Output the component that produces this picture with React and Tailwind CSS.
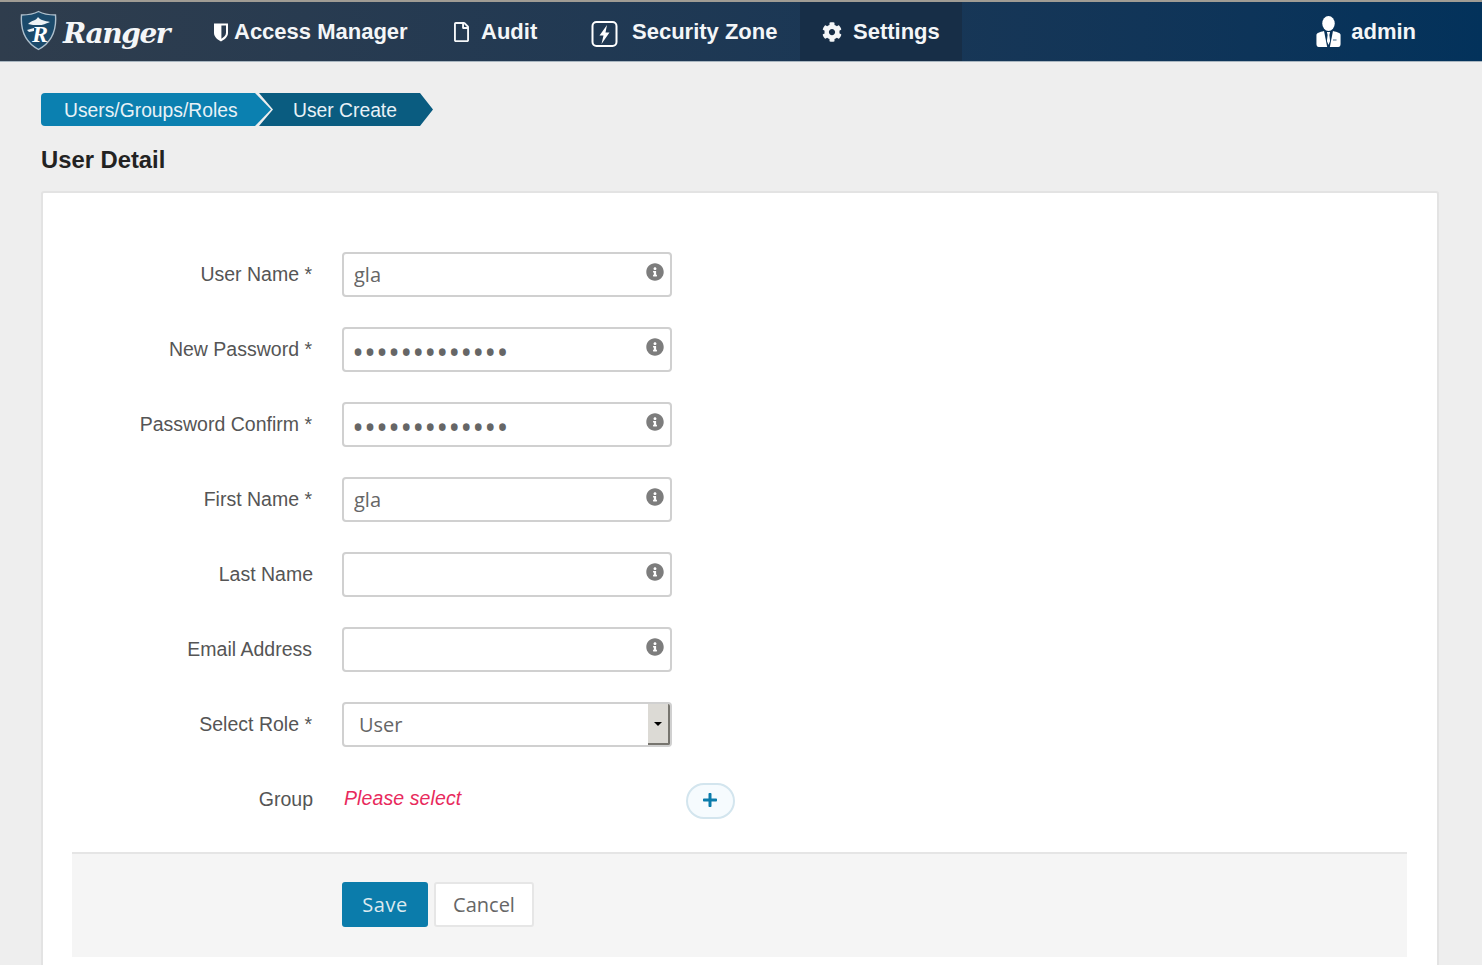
import React from "react";
import { FaCog, FaInfoCircle, FaPlus, FaRegFile } from "react-icons/fa";

const sans = "[font-family:'Liberation_Sans',Arial,sans-serif]";
const openSans = "[font-family:'Open_Sans',sans-serif]";

function Logo() {
  return (
    <div className="relative w-[39px] h-[41px] shrink-0">
      <svg viewBox="0 0 39 41" className="absolute inset-0 w-full h-full">
        <path d="M19.5 1.5 C25 4.5 30 5 36.5 5 C37.5 18 35 31 19.5 39.5 C4 31 1.5 18 2.5 5 C9 5 14 4.5 19.5 1.5 Z" fill="#1b4a6b" stroke="#aebfcc" strokeWidth="1.4" />
        <path d="M9 14 C13 10 17 11 19 7 C21 10 26 11 31 12 C26 14 24 15 22 15 L14 15 Z" fill="#eef2f5" />
        <path d="M8 20 L15 18 L15 21 L10 22 Z" fill="#eef2f5" />
      </svg>
      <span className="absolute left-[13px] top-[11px] text-[24px] leading-[26px] font-bold italic text-white [font-family:'Liberation_Serif',serif]">R</span>
    </div>
  );
}

function ShieldIcon() {
  return (
    <svg viewBox="0 0 16 20" className="w-[16px] h-[20px] shrink-0">
      <path fillRule="evenodd" fill="#fff" d="M1 1.5 H15 V11 C15 15 11 18 8 19.5 C5 18 1 15 1 11 Z M8.4 3.6 V16.8 C10.6 15.4 13 13.6 13 10.8 V3.6 Z" />
    </svg>
  );
}

function ZoneIcon() {
  return (
    <svg viewBox="0 0 28 28" className="w-[28px] h-[28px] shrink-0" fill="none">
      <rect x="1.5" y="3" width="24" height="24" rx="4" stroke="#fff" strokeWidth="2" />
      <path d="M16 6 L8.5 16.5 H12.5 L10.5 25 L18.5 13.5 H14.5 Z" fill="#fff" />
    </svg>
  );
}

function AdminIcon() {
  return (
    <svg viewBox="0 0 28 32" preserveAspectRatio="none" className="w-[25px] h-[32px] shrink-0">
      <ellipse cx="14" cy="7.5" rx="7" ry="7.5" fill="#fff" />
      <path fill="#fff" d="M0.5 19 C0.5 17 4 16 9 15 L12.5 31 H3 C1.5 31 0.5 30 0.5 28 Z" />
      <path fill="#fff" d="M27.5 19 C27.5 17 24 16 19 15 L15.5 31 H25 C26.5 31 27.5 30 27.5 28 Z" />
      <path fill="#fff" d="M12.2 16 H15.8 L15 19 L15.8 25 L14 29 L12.2 25 L13 19 Z" />
      <rect x="19" y="23" width="4" height="2" fill="#9fb3c4" />
    </svg>
  );
}

function NavItem({ icon, label, className = "" }) {
  return (
    <div className={`flex items-center h-full font-bold text-[22px] text-[#f4f6f8] ${sans} ${className}`}>
      {icon}
      <span>{label}</span>
    </div>
  );
}

function Row({ label, flush = false, children }) {
  return (
    <div className="flex items-center h-[45px] gap-[29px]">
      <label className={`w-[241px] shrink-0 text-right -mt-[2px] text-[19.5px] leading-[28px] text-[#555] ${flush ? "" : "pr-px"} ${sans}`}>{label}</label>
      {children}
    </div>
  );
}

function TextRow({ label, value = "", password = false, flush = false }) {
  return (
    <Row label={label} flush={flush}>
      <div className="relative w-[330px] h-[45px]">
        <input
          readOnly
          type={password ? "password" : "text"}
          value={value}
          className={`w-full h-full rounded-[4px] border-2 border-[#d0d0d0] bg-white pr-[30px] text-[#666] outline-none ${openSans} ${password ? "pl-[8px] pt-[3px] text-[32px]" : "pl-[10px] text-[20px]"}`}
        />
        <FaInfoCircle className="absolute right-[8px] top-[11px] w-[18px] h-[18px] text-[#7d7d7d]" />
      </div>
    </Row>
  );
}

export default function App() {
  return (
    <div className="h-[965px] overflow-hidden bg-[#eeeeee]">
      <header className="h-[62px] border-t-2 border-[#a09c94] bg-gradient-to-r from-[#2f3d4d] to-[#03325b] flex items-stretch pl-[19px] pr-[66px] border-b border-b-[#a9b6c0]">
        <div className="flex items-center gap-[5px] w-[194px] -mt-[2px]">
          <Logo />
          <span className="mt-[7px] text-[28px] leading-[40px] font-bold italic text-[#f4f6f8] [font-family:'DejaVu_Serif',serif] tracking-[-1.4px]">Ranger</span>
        </div>
        <NavItem icon={<span className="mr-[5px]"><ShieldIcon /></span>} label="Access Manager" className="w-[240px]" />
        <NavItem icon={<FaRegFile className="w-[17px] h-[20px] mr-[11px]" />} label="Audit" className="w-[138px]" />
        <NavItem icon={<span className="mr-[13px] mt-[3px]"><ZoneIcon /></span>} label="Security Zone" className="w-[209px]" />
        <NavItem icon={<FaCog className="w-[20px] h-[20px] mr-[11px]" />} label="Settings" className="w-[162px] pl-[22px] bg-[#172e47]" />
        <div className="ml-auto flex items-center gap-[10px]">
          <AdminIcon />
          <span className={`font-bold text-[22px] text-[#f4f6f8] ${sans}`}>admin</span>
        </div>
      </header>

      <main className="pl-[41px] pr-[43px] pt-[31px]">
        <nav className={`flex h-[33px] text-[19.3px] text-[#e9f2f7] ${sans}`}>
          <div className="flex items-center w-[230px] pl-[23px] pt-[3px] rounded-l-[4px] bg-[#0b80b0] [clip-path:polygon(0_0,214px_0,230px_50%,214px_100%,0_100%)]">Users/Groups/Roles</div>
          <div className="flex items-center w-[174px] -ml-[12px] pl-[34px] pt-[3px] bg-[#0a5c80] [clip-path:polygon(0_0,161px_0,174px_50%,161px_100%,0_100%,14px_50%)]">User Create</div>
        </nav>

        <h1 className={`mt-[19px] text-[23.8px] leading-[30px] font-bold text-[#222] ${sans}`}>User Detail</h1>

        <section className="mt-[16px] h-[900px] rounded-[3px] border-2 border-[#e3e3e3] bg-white pl-[29px] pr-[30px] pt-[59px]">
          <div className="flex flex-col gap-[30px]">
            <TextRow label="User Name *" value="gla" />
            <TextRow label="New Password *" value="aaaaaaaaaaaaa" password />
            <TextRow label="Password Confirm *" value="aaaaaaaaaaaaa" password />
            <TextRow label="First Name *" value="gla" />
            <TextRow label="Last Name" flush />
            <TextRow label="Email Address" />
            <Row label="Select Role *">
              <div className="flex items-stretch w-[330px] h-[45px] rounded-[4px] border-2 border-[#d0d0d0] bg-white overflow-hidden">
                <span className={`flex-1 flex items-center pl-[15px] pt-[1px] text-[20px] text-[#666] ${openSans}`}>User</span>
                <span className="w-[22px] flex items-center justify-center bg-[#dcdad5] border-r-2 border-b-2 border-[#77756f]">
                  <span className="w-0 h-0 border-x-[4px] border-x-transparent border-t-[4px] border-t-black" />
                </span>
              </div>
            </Row>
            <Row label="Group" flush>
              <div className="relative flex items-center w-[393px] h-[45px]">
                <span className={`ml-[2px] -mt-[2px] italic text-[19.5px] text-[#e8295c] tracking-[0.1px] ${sans}`}>Please select</span>
                <button className="absolute left-[344px] top-[6px] flex items-center justify-center w-[49px] h-[36px] rounded-full border-2 border-[#d3e5ee] bg-[#f6fbfe]">
                  <FaPlus className="w-[16px] h-[16px] -mt-[2px] -ml-[1px] text-[#0b7cab]" />
                </button>
              </div>
            </Row>
          </div>

          <div className="mt-[30px] h-[105px] border-t-2 border-[#e5e5e5] bg-[#f5f5f5] pl-[270px] pt-[28px] flex items-start gap-[6px]">
            <button className={`w-[86px] h-[45px] rounded-[3px] bg-[#0b7cab] text-[20px] tracking-[0.6px] text-[#dce9ef] ${openSans}`}>Save</button>
            <button className={`w-[100px] h-[45px] rounded-[3px] border-2 border-[#e6e6e6] bg-white text-[20px] text-[#666] ${openSans}`}>Cancel</button>
          </div>
        </section>
      </main>
    </div>
  );
}
